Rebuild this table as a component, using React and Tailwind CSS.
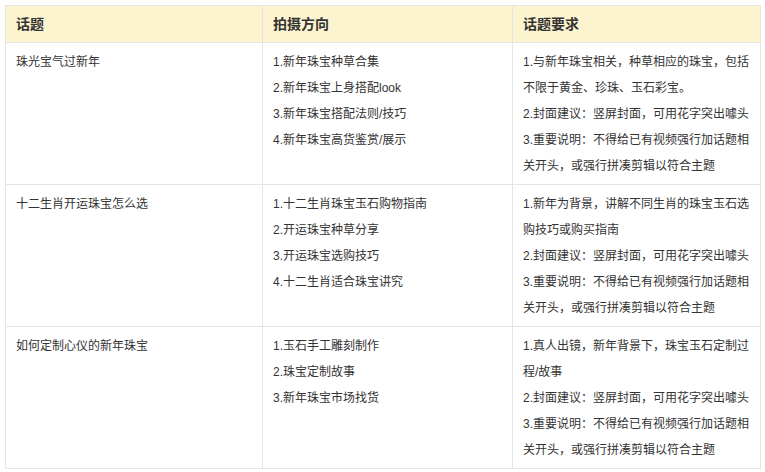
const ROWS = [
  {
    topic: '珠光宝气过新年',
    directions: ['1.新年珠宝种草合集', '2.新年珠宝上身搭配look', '3.新年珠宝搭配法则/技巧', '4.新年珠宝高货鉴赏/展示'],
    reqs: [
      '1.与新年珠宝相关，种草相应的珠宝，包括不限于黄金、珍珠、玉石彩宝。',
      '2.封面建议：竖屏封面，可用花字突出噱头',
      '3.重要说明：不得给已有视频强行加话题相关开头，或强行拼凑剪辑以符合主题',
    ],
  },
  {
    topic: '十二生肖开运珠宝怎么选',
    directions: ['1.十二生肖珠宝玉石购物指南', '2.开运珠宝种草分享', '3.开运珠宝选购技巧', '4.十二生肖适合珠宝讲究'],
    reqs: [
      '1.新年为背景，讲解不同生肖的珠宝玉石选购技巧或购买指南',
      '2.封面建议：竖屏封面，可用花字突出噱头',
      '3.重要说明：不得给已有视频强行加话题相关开头，或强行拼凑剪辑以符合主题',
    ],
  },
  {
    topic: '如何定制心仪的新年珠宝',
    directions: ['1.玉石手工雕刻制作', '2.珠宝定制故事', '3.新年珠宝市场找货'],
    reqs: [
      '1.真人出镜，新年背景下，珠宝玉石定制过程/故事',
      '2.封面建议：竖屏封面，可用花字突出噱头',
      '3.重要说明：不得给已有视频强行加话题相关开头，或强行拼凑剪辑以符合主题',
    ],
  },
];

export default function App() {
  return (
    <div
      className="w-[765px] h-[472px] bg-white p-[5px] text-[#333]"
      style={{ fontFamily: '"Liberation Sans", "Noto Sans CJK SC", sans-serif' }}
    >
      <table className="w-[755px] table-fixed border-collapse">
        <colgroup>
          <col className="w-[257px]" />
          <col className="w-[250px]" />
          <col className="w-[248px]" />
        </colgroup>
        <thead>
          <tr className="bg-[#fbf4cf]">
            {['话题', '拍摄方向', '话题要求'].map((h) => (
              <th
                key={h}
                className="border border-[#e5e5e5] px-[10px] py-[5px] text-left text-[14px] font-bold leading-[26px]"
              >
                {h}
              </th>
            ))}
          </tr>
        </thead>
        <tbody>
          {ROWS.map((row) => (
            <tr key={row.topic} className="h-[142px]">
              <td className="border border-[#e5e5e5] pl-[10px] pr-[8px] pt-[6px] pb-[5px] align-top text-[12px] leading-[26px]">
                {row.topic}
              </td>
              <td className="border border-[#e5e5e5] pl-[10px] pr-[8px] pt-[6px] pb-[5px] align-top text-[12px] leading-[26px]">
                {row.directions.map((d) => (
                  <div key={d}>{d}</div>
                ))}
              </td>
              <td className="border border-[#e5e5e5] pl-[10px] pr-[8px] pt-[6px] pb-[5px] align-top text-[12px] leading-[26px]">
                {row.reqs.map((r) => (
                  <div key={r}>{r}</div>
                ))}
              </td>
            </tr>
          ))}
        </tbody>
      </table>
    </div>
  );
}
